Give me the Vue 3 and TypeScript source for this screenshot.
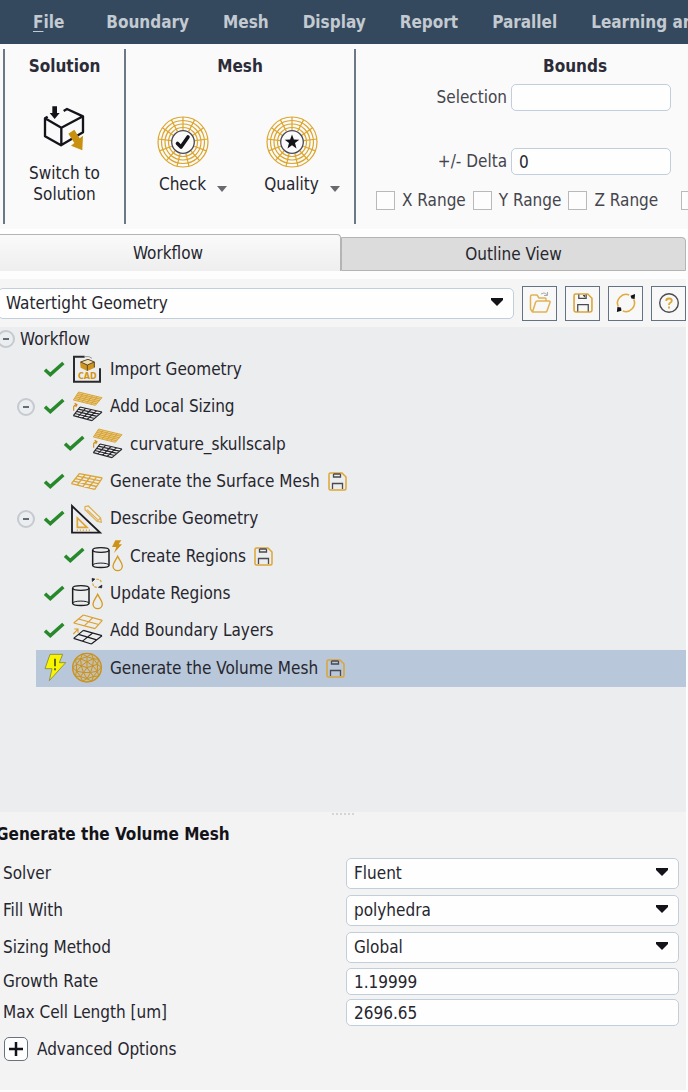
<script setup lang="ts">
import { ref } from 'vue'

type Point = [number, number]
type IconName = 'cad' | 'sizing' | 'surface' | 'describe' | 'create' | 'update' | 'layers' | 'volume'

interface Task {
  label: string
  icon: IconName
  nested?: boolean
  toggle?: boolean
  saved?: boolean
  pending?: boolean
}

const menus = ['Boundary', 'Mesh', 'Display', 'Report', 'Parallel', 'Learning and Support']
const ranges = ['X Range', 'Y Range', 'Z Range']

const tasks: Task[] = [
  { label: 'Import Geometry', icon: 'cad' },
  { label: 'Add Local Sizing', icon: 'sizing', toggle: true },
  { label: 'curvature_skullscalp', icon: 'sizing', nested: true },
  { label: 'Generate the Surface Mesh', icon: 'surface', saved: true },
  { label: 'Describe Geometry', icon: 'describe', toggle: true },
  { label: 'Create Regions', icon: 'create', nested: true, saved: true },
  { label: 'Update Regions', icon: 'update' },
  { label: 'Add Boundary Layers', icon: 'layers' },
  { label: 'Generate the Volume Mesh', icon: 'volume', saved: true, pending: true },
]

const selection = ref('')
const delta = ref('0')
const workflow = ref('Watertight Geometry')

const choices = [
  { id: 'solver', label: 'Solver', value: 'Fluent' },
  { id: 'fill', label: 'Fill With', value: 'polyhedra' },
  { id: 'sizing', label: 'Sizing Method', value: 'Global' },
]
const numbers = ref([
  { id: 'growth', label: 'Growth Rate', value: '1.19999' },
  { id: 'length', label: 'Max Cell Length [um]', value: '2696.65' },
])

/* Lines of an n × n grid stretched over the quad a-b-c-d. */
function quadMesh(a: Point, b: Point, c: Point, d: Point, n: number): string {
  const mix = (p: Point, q: Point, t: number): Point => [p[0] + (q[0] - p[0]) * t, p[1] + (q[1] - p[1]) * t]
  let out = ''
  for (let i = 0; i <= n; i++) {
    const t = i / n
    out += seg(mix(a, b, t), mix(d, c, t)) + seg(mix(a, d, t), mix(b, c, t))
  }
  return out
}

function ring(r: number, count: number, turn: number, cx = 0, cy = 0): Point[] {
  return Array.from({ length: count }, (_, i) => {
    const a = ((i + turn) / count) * Math.PI * 2 - Math.PI / 2
    return [cx + Math.cos(a) * r, cy + Math.sin(a) * r] as Point
  })
}

function seg(p: Point, q: Point): string {
  return `M${p[0].toFixed(1)} ${p[1].toFixed(1)}L${q[0].toFixed(1)} ${q[1].toFixed(1)}`
}

const sizingTop = quadMesh([20, 0], [90, 17], [70, 40], [4, 24], 5)
const sizingBase = quadMesh([24, 45], [90, 60], [60, 86], [4, 71], 4)
const surfaceMesh = quadMesh([22, 20], [91, 33], [68, 67], [-2, 50], 4)
const layerTop = quadMesh([34, -3], [91, 13], [69, 38], [5, 21], 2)
const layerBase = quadMesh([34, 43], [90, 59], [58, 84], [5, 67], 2)

const outerRing = ring(25, 13, 0)
const spokes = ring(12, 13, 0).map((p, i) => seg(p, outerRing[i])).join('')

/* Triangulated sphere: hub, inner pentagon, middle and outer rings. */
function sphere(): string {
  const hub: Point = [45, 44]
  const inner = ring(18, 5, 0, 45, 44)
  const mid = ring(33, 10, 0, 45, 44)
  const rim = ring(43, 10, 0.5, 45, 44)
  let out = ''
  inner.forEach((p, i) => {
    out += seg(hub, p) + seg(p, inner[(i + 1) % 5])
    out += seg(p, mid[2 * i]) + seg(p, mid[(2 * i + 1) % 10]) + seg(p, mid[(2 * i + 9) % 10])
  })
  mid.forEach((p, i) => {
    out += seg(p, mid[(i + 1) % 10]) + seg(p, rim[i]) + seg(p, rim[(i + 9) % 10])
  })
  return out
}
const sphereMesh = sphere()
</script>

<template>
  <div class="app">
    <nav class="menubar">
      <a href="#" class="file"><u>F</u>ile</a>
      <a v-for="m in menus" :key="m" href="#">{{ m }}</a>
    </nav>

    <section class="ribbon">
      <div class="group solution">
        <h2>Solution</h2>
        <button class="tool" type="button">
          <svg width="48" height="48" viewBox="12 6 144 144" fill="none">
            <path d="M32 47L24 52V106L72 133L138 94V46L90 24L80 30M24 52L73 80L138 46M73 80V133" stroke="#15131a" stroke-width="7" stroke-linejoin="round" />
            <path d="M46 16H60V36H68L53 54L38 36H46Z" fill="#15131a" />
            <path d="M94 98L112 86L128 112L138 104L136 148L102 134L112 126Z" fill="#c8910f" />
          </svg>
          <span>Switch to<br />Solution</span>
        </button>
      </div>

      <div class="group mesh">
        <h2>Mesh</h2>
        <div class="tools">
          <button v-for="kind in ['Check', 'Quality']" :key="kind" class="tool" type="button">
            <svg width="52" height="52" viewBox="-26 -26 52 52" fill="none">
              <g stroke="#dda62c" stroke-width="1.2">
                <circle r="25" /><circle r="21.5" /><circle r="18" /><circle r="14.5" />
                <path :d="spokes" />
              </g>
              <circle r="11.3" fill="#fafafa" stroke="#4a4a50" stroke-width="1.3" />
              <path v-if="kind === 'Check'" d="M-5.5 1.5L-2 5L5 -5" stroke="#15131a" stroke-width="3.6" stroke-linejoin="round" stroke-linecap="round" />
              <path v-else d="M0 -7.5L1.9 -2.4L7.3 -2.2L3 1.1L4.5 6.4L0 3.3L-4.5 6.4L-3 1.1L-7.3 -2.2L-1.9 -2.4Z" fill="#15131a" />
            </svg>
            <span>{{ kind }}</span>
            <svg class="drop" width="10" height="6" viewBox="0 0 10 6"><path d="M0 0H10L5 6Z" fill="#6a6a6e" /></svg>
          </button>
        </div>
      </div>

      <div class="group bounds">
        <h2>Bounds</h2>
        <div class="field">
          <label for="selection">Selection</label>
          <input id="selection" v-model="selection" type="text" />
        </div>
        <div class="field delta">
          <label for="delta">+/- Delta</label>
          <input id="delta" v-model="delta" type="text" />
        </div>
        <div class="ranges">
          <label v-for="r in ranges" :key="r"><input type="checkbox" />{{ r }}</label>
          <input class="last" type="checkbox" aria-label="Reset" />
        </div>
      </div>
    </section>

    <div class="tabs" role="tablist">
      <button class="tab active" type="button" role="tab" aria-selected="true">Workflow</button>
      <button class="tab" type="button" role="tab" aria-selected="false">Outline View</button>
    </div>

    <div class="toolbar">
      <div class="combo">
        <select v-model="workflow" aria-label="Workflow type"><option>Watertight Geometry</option></select>
        <svg width="12" height="8" viewBox="0 0 12 8"><path d="M0 0H12V2L6 8L0 2Z" fill="#15131a" /></svg>
      </div>
      <button type="button" aria-label="Open">
        <svg width="24" height="24" viewBox="0 0 24 24" fill="none" stroke="#e0b252" stroke-width="1.5" stroke-linejoin="round">
          <path d="M4.500 21L2.500 18V5.500Q2.500 4 4 4H9L11 7H17Q18 7 18 8V10M4.500 21L7.500 11.500Q8 10 9.500 10H21Q22.500 10 22 11.500L19 20Q18.700 21 17.500 21Z" />
          <path d="M13 3Q16 0.500 19 3.500M19.500 1V4.500H16" stroke="#aaa" stroke-width="1" />
        </svg>
      </button>
      <button type="button" aria-label="Save">
        <svg width="20" height="20" viewBox="0 0 19 19" fill="none">
          <path d="M1 2.500Q1 1 2.500 1H14L18 5V16.500Q18 18 16.500 18H2.500Q1 18 1 16.500Z" stroke="#dca536" stroke-width="1.5" />
          <path d="M5.500 1.500V5H12.500V1.500M4.500 17.500V11H14.500V17.500" stroke="#4a4a50" stroke-width="1.2" />
          <path d="M9.500 2.500H11V4" stroke="#4a4a50" />
        </svg>
      </button>
      <button type="button" aria-label="Refresh">
        <svg width="20" height="20" viewBox="0 0 22 22" fill="none">
          <path d="M14.500 2.200A9.500 9.500 0 0 0 2.500 15M19.500 7A9.500 9.500 0 0 1 7.500 19.800" stroke="#e0ab3c" stroke-width="1.7" />
          <path d="M16 3L21 1L20.500 6.500L17 6ZM1.500 15.500L5.500 16L6 19.500L1 21Z" fill="#15131a" />
        </svg>
      </button>
      <button type="button" aria-label="Help">
        <svg width="22" height="22" viewBox="0 0 22 22" fill="none">
          <circle cx="11" cy="11" r="9.300" stroke="#4a4a50" stroke-width="1.400" />
          <path d="M8.200 9Q8.200 6.500 11 6.500T13.800 8.800Q13.800 10 12.300 10.800Q11 11.500 11 13M11 14.500V16.500" stroke="#dca536" stroke-width="1.800" />
        </svg>
      </button>
    </div>

    <section class="tree">
      <div class="root">
        <button class="toggle" type="button" aria-label="Collapse Workflow"></button>
        <span>Workflow</span>
      </div>
      <ul>
        <li v-for="t in tasks" :key="t.label">
          <span class="slot"><button v-if="t.toggle" class="toggle" type="button" :aria-label="'Collapse ' + t.label"></button></span>
          <div class="task" :class="{ nested: t.nested, selected: t.pending }">
            <svg v-if="t.pending" width="20" height="28" viewBox="0 0 60 84">
              <path d="M18 1H56L46 26H65L16 80L24 44H3Z" fill="#f8f500" stroke="#85853c" stroke-width="2.500" />
              <path d="M33 14V37M33 43V49" stroke="#222" stroke-width="4" />
            </svg>
            <svg v-else width="20" height="16" viewBox="0 0 60 48">
              <path d="M3 23L19 38L58 3" fill="none" stroke="#27892b" stroke-width="10.500" />
            </svg>

            <svg width="30" height="30" viewBox="0 0 90 90" fill="none">
              <template v-if="t.icon === 'cad'">
                <path d="M38 5H6V80H84V40" stroke="#2a2a2e" stroke-width="6" />
                <path d="M38 5Q52 2 60 10" stroke="#999" stroke-width="3" />
                <path d="M24 21L48 12L68 20V38L46 48L26 38Z" fill="#cf9520" />
                <path d="M26 21L48 13L67 21L46 30ZM46 30V47M67 21V37" fill="#f0ddb0" stroke="#5b492b" stroke-width="3" />
                <text x="46" y="71" text-anchor="middle" class="cad">CAD</text>
              </template>
              <template v-else-if="t.icon === 'sizing'">
                <path d="M20 0L90 17L70 40L4 24Z" fill="#dda62c" fill-opacity="0.45" />
                <path :d="sizingTop" stroke="#d79c1f" stroke-width="2.500" />
                <path :d="sizingBase" stroke="#29292e" stroke-width="3.5" />
                <path d="M5 56V46Q5 40 14 38M8 34L15 38L11 45" stroke="#d08e19" stroke-width="3.500" />
              </template>
              <path v-else-if="t.icon === 'surface'" :d="surfaceMesh" stroke="#dca536" stroke-width="4" />
              <template v-else-if="t.icon === 'describe'">
                <path d="M0 6V86H84Z" stroke="#1c1c22" stroke-width="5.500" />
                <path d="M16 42V70H45Z" stroke="#dca536" stroke-width="5" />
                <path d="M16 76V82M25 76V82M34 76V82M43 76V82M52 76V82" stroke="#dca536" stroke-width="3" />
                <path d="M39 8L49 6L86 42L88 55L75 52L39 17ZM75 52L86 42M45 17L77 47" stroke="#dfae4a" stroke-width="3.5" />
              </template>
              <template v-else-if="t.icon === 'create' || t.icon === 'update'">
                <path d="M2 27V73C2 82 51 82 51 73V27" stroke="#1c1c22" stroke-width="4.500" />
                <ellipse cx="26.500" cy="27" rx="24.500" ry="7" stroke="#1c1c22" stroke-width="4" />
                <path d="M2 73C2 64 51 64 51 73" stroke="#1c1c22" stroke-width="3" />
                <path d="M77 46C72 57 63 66 63 75A14 14 0 0 0 91 75C91 66 82 57 77 46Z" stroke="#d49a20" stroke-width="4" />
                <path v-if="t.icon === 'create'" d="M70 -2H88L80 10H90L66 36L73 18H60Z" fill="#cf9218" />
                <template v-else>
                  <path d="M73 1Q86 -1 88 11M62 13Q64 26 77 25" stroke="#dfa73c" stroke-width="3.500" stroke-dasharray="8 3" />
                  <path d="M60 -2L69 0L61 8ZM79 25L90 18L89 27Z" fill="#1c1c22" stroke="#1c1c22" stroke-width="1.500" />
                </template>
              </template>
              <template v-else-if="t.icon === 'layers'">
                <path :d="layerTop" stroke="#dca02a" stroke-width="3.500" />
                <path :d="layerBase" stroke="#1c1c22" stroke-width="3.500" />
                <path d="M4 54L17 40M7 39H18V50" stroke="#dca02a" stroke-width="3.500" />
              </template>
              <template v-else>
                <circle cx="45" cy="44" r="43" fill="#d9ae55" fill-opacity="0.35" stroke="#c9921f" stroke-width="4" />
                <path :d="sphereMesh" stroke="#c9921f" stroke-width="3" />
              </template>
            </svg>

            <span>{{ t.label }}</span>
            <svg v-if="t.saved" width="19" height="19" viewBox="0 0 19 19" fill="none">
              <path d="M1 2.500Q1 1 2.500 1H14L18 5V16.500Q18 18 16.500 18H2.500Q1 18 1 16.500Z" stroke="#dca536" stroke-width="1.500" />
              <path d="M5.500 2V5H12.500V2M4.500 17V11.500H14.500V17M5.500 2H12.500" stroke="#4a4a50" stroke-width="1.300" />
            </svg>
          </div>
        </li>
      </ul>
    </section>

    <section class="details">
      <div class="grip"><i v-for="n in 6" :key="n"></i></div>
      <h3>Generate the Volume Mesh</h3>
      <div class="form">
        <div v-for="c in choices" :key="c.id" class="row choice">
          <label :for="c.id">{{ c.label }}</label>
          <div class="combo">
            <select :id="c.id"><option>{{ c.value }}</option></select>
            <svg width="12" height="8" viewBox="0 0 12 8"><path d="M0 0H12V2L6 8L0 2Z" fill="#15131a" /></svg>
          </div>
        </div>
        <div v-for="n in numbers" :key="n.id" class="row">
          <label :for="n.id">{{ n.label }}</label>
          <input :id="n.id" v-model="n.value" type="text" />
        </div>
        <div class="advanced">
          <button id="advanced" type="button" aria-label="Expand advanced options">
            <svg width="14" height="14" viewBox="0 0 14 14"><path d="M7 0V14M0 7H14" stroke="#15131a" stroke-width="2.500" /></svg>
          </button>
          <label for="advanced">Advanced Options</label>
        </div>
      </div>
    </section>
  </div>
</template>

<style>
body {
  margin: 0;
  background: #fdfdfd;
}
</style>

<style scoped>
.app {
  font: 17px/21px Tahoma, 'DejaVu Sans Condensed', 'DejaVu Sans', sans-serif;
  color: #26262e;
  overflow: hidden;
}
.app * {
  box-sizing: border-box;
}
button,
input,
select {
  font: inherit;
  color: inherit;
  margin: 0;
  padding: 0;
}
h2,
h3 {
  margin: 0;
  font-size: 17px;
  font-weight: bold;
}
svg {
  display: block;
  flex: none;
  overflow: visible;
}

.menubar {
  display: flex;
  align-items: center;
  gap: 34px;
  height: 44px;
  padding-left: 33px;
  background: #34495e;
  white-space: nowrap;
}
.menubar a {
  color: #c3cad1;
  font-weight: bold;
  text-decoration: none;
}
.menubar .file {
  margin-right: 8px;
}
.menubar u {
  text-underline-offset: 3px;
}

.ribbon {
  display: flex;
  padding: 5px 0 5px 3px;
  background: #fafafa;
  border-bottom: 1px solid #fff;
}
.group {
  flex: none;
  height: 175px;
  padding-top: 7px;
  border-left: 2px solid #6c7883;
}
.group h2 {
  text-align: center;
  color: #2c2c38;
}
.solution {
  width: 121px;
}
.mesh {
  width: 230px;
}
.tool {
  display: grid;
  justify-items: center;
  border: 0;
  background: none;
}
.solution .tool {
  width: 100%;
  padding-top: 26px;
}
.solution .tool span {
  padding-top: 12px;
}
.tools {
  display: grid;
  grid-template-columns: 109px 109px;
  padding: 39px 5px 0 2px;
}
.tools .tool {
  position: relative;
}
.tools .tool span {
  padding-top: 6px;
}
.tools .drop {
  position: absolute;
  right: 10px;
  bottom: 3px;
}
.tools .tool:last-child .drop {
  right: 6px;
}
.bounds {
  width: 420px;
  padding-left: 20px;
  color: #45454d;
}
.field {
  display: grid;
  grid-template-columns: 131px 160px;
  gap: 4px;
  align-items: center;
  padding-top: 7px;
}
.field.delta {
  padding-top: 37px;
}
.field label {
  text-align: right;
}
input[type='text'] {
  width: 100%;
  height: 27px;
  padding: 0 7px;
  border: 1px solid #c3cedb;
  border-radius: 5px;
  background: #fefefe;
  color: #26262e;
}
.ranges {
  display: flex;
  align-items: center;
  gap: 7px;
  padding-top: 15px;
}
.ranges label {
  display: flex;
  align-items: center;
  gap: 7px;
}
input[type='checkbox'] {
  appearance: none;
  flex: none;
  width: 19px;
  height: 19px;
  border: 1px solid #b9b9b9;
  background: #fdfdfd;
}
.ranges .last {
  margin-left: 16px;
}

.tabs {
  display: grid;
  grid-template-columns: 1fr 1fr;
  align-items: end;
  margin-left: -4px;
  padding: 4px 2px 0 0;
  background: #fefefe;
}
.tab {
  height: 34px;
  border: 1px solid #b4b4b4;
  border-radius: 0 4px 0 0;
  background: #dcdcdc;
}
.tab.active {
  height: 37px;
  border-width: 1px 1px 0 0;
  background: linear-gradient(#fafafa, #eeeeee);
}

.toolbar {
  display: flex;
  align-items: center;
  gap: 8px;
  height: 48px;
  margin: 8px 2px 0 -2px;
  background: #f5f5f5;
}
.toolbar button {
  display: grid;
  place-items: center;
  flex: none;
  width: 35px;
  height: 35px;
  border: 1px solid #647282;
  background: #f8f8f8;
}
.combo {
  position: relative;
  flex: 1;
}
.combo select {
  display: block;
  appearance: none;
  width: 100%;
  height: 31px;
  padding: 0 7px;
  border: 1px solid #c3cedb;
  border-radius: 5px;
  background: #fefefe;
}
.combo svg {
  position: absolute;
  right: 11px;
  top: 10px;
  pointer-events: none;
}

.tree {
  min-height: 485px;
  margin-right: 2px;
  background: #ecedee;
}
.root {
  display: flex;
  align-items: center;
  gap: 5px;
  height: 24px;
  margin-left: -3px;
}
.toggle {
  display: grid;
  place-items: center;
  width: 18px;
  height: 18px;
  border: 2px solid #c5cad1;
  border-radius: 50%;
  background: none;
}
.toggle::before {
  content: '';
  width: 6px;
  height: 2px;
  background: #5f6d7c;
}
.tree ul {
  display: grid;
  grid-auto-rows: 1fr;
  min-height: 336px;
  margin: 0;
  padding: 0;
  list-style: none;
}
.tree li {
  display: flex;
}
.slot {
  display: flex;
  align-items: center;
  justify-content: flex-end;
  flex: none;
  width: 36px;
  padding-right: 1px;
}
.task {
  display: flex;
  align-items: center;
  flex: 1;
  gap: 8px;
  padding-left: 8px;
}
.task.nested {
  padding-left: 28px;
}
.task.selected {
  background: #b8c7d9;
}
.cad {
  font: bold 24px 'DejaVu Sans', sans-serif;
  fill: #d29415;
}

.details {
  min-height: 278px;
  margin-right: 2px;
  background: #f3f3f3;
}
.grip {
  display: flex;
  justify-content: center;
  gap: 2px;
  padding-top: 1px;
}
.grip i {
  width: 2px;
  height: 2px;
  background: #d5d5d5;
}
h3 {
  margin-left: -4px;
  padding: 9px 0 12px;
  color: #15131a;
}
.form {
  display: grid;
  gap: 4px;
  padding: 0 7px 29px 3px;
}
.row {
  display: grid;
  grid-template-columns: 343px 1fr;
  align-items: center;
}
.choice {
  height: 33px;
}
.advanced {
  display: flex;
  align-items: center;
  gap: 9px;
  padding: 7px 0 0 1px;
}
.advanced button {
  display: grid;
  place-items: center;
  width: 24px;
  height: 24px;
  border: 1px solid #68737f;
  border-radius: 5px;
  background: #fefefe;
}
</style>
